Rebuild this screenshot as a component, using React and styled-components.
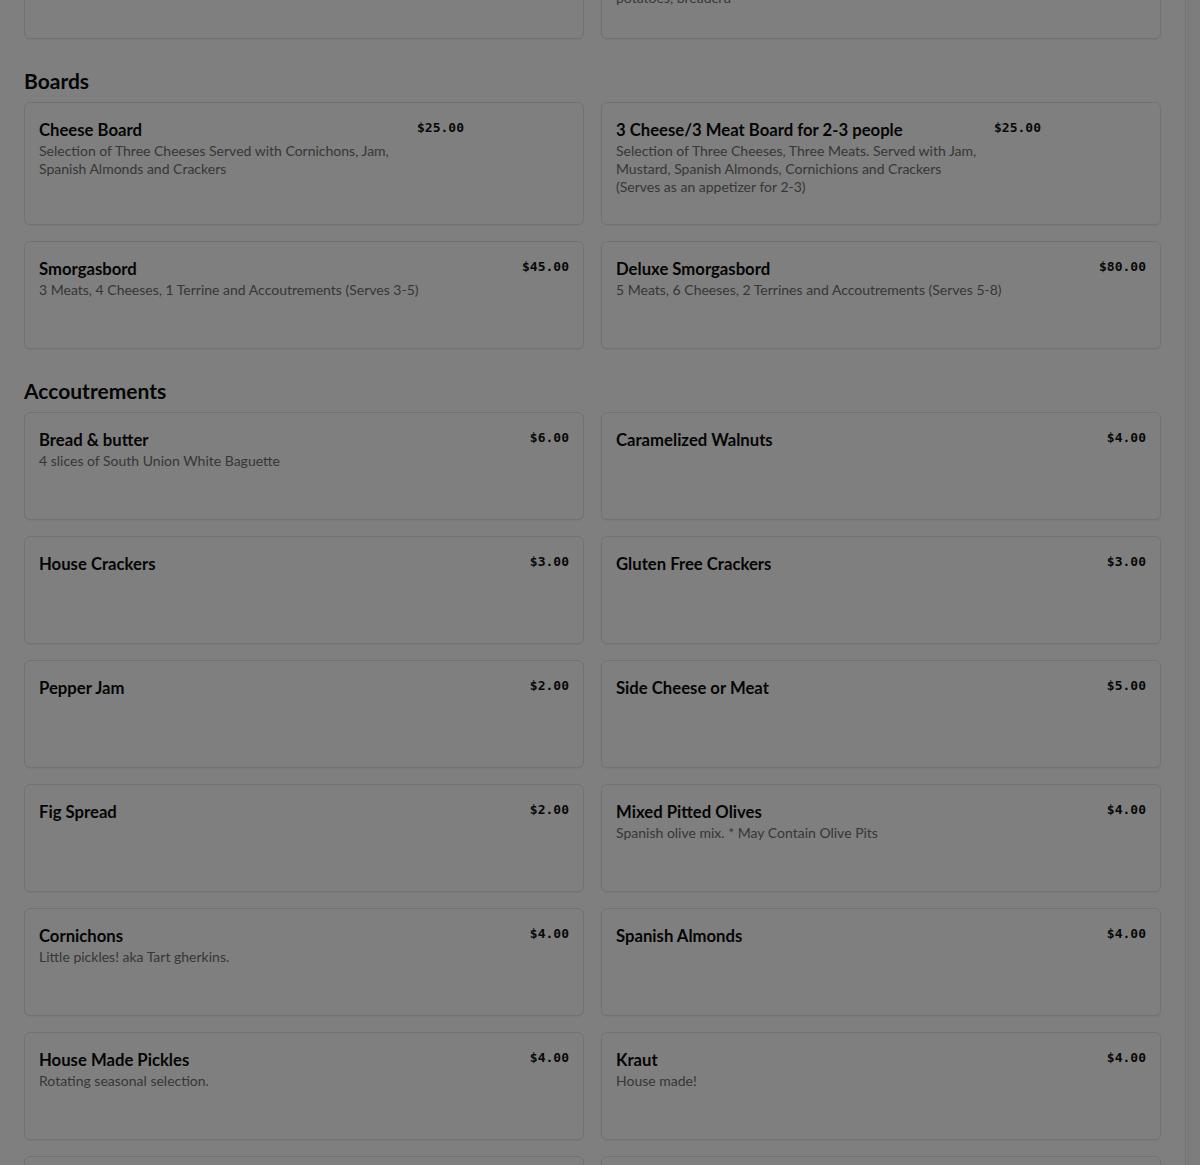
import React, { useLayoutEffect, useRef } from "react";
import styled, { createGlobalStyle } from "styled-components";

const GlobalStyle = createGlobalStyle`
  html, body { margin: 0; padding: 0; height: 100%; overflow: hidden; }
  body { font-family: Lato, "Noto Sans", sans-serif; background: #ffffff; color: #1a1a1a; }
  * { box-sizing: border-box; }
`;

const Page = styled.div`
  display: flex;
  height: 100vh;
  overflow: hidden;
  background: #ffffff;
`;

const Main = styled.main`
  position: relative;
  flex: 1;
  height: 100vh;
  overflow-y: auto;
  scrollbar-width: none;
  padding: 24px 24px 40px;
  &::-webkit-scrollbar { display: none; }
`;

const Gutter = styled.div`
  flex: 0 0 15px;
  background: linear-gradient(to right, #e6e6e6 0, #e6e6e6 1px, #fbfbfb 1px, #fbfbfb 3px, #ececec 3px, #ececec 4px, #fafafa 4px);
`;

const Overlay = styled.div`
  position: fixed;
  inset: 0;
  background: rgba(0, 0, 0, 0.5);
  z-index: 10;
`;

const Section = styled.section``;

const SectionTitle = styled.h2`
  margin: 28px 0 7px;
  font-family: Lato, "Noto Sans", sans-serif;
  font-size: 21px;
  line-height: 28px;
  font-weight: 700;
  color: #0a0a0a;
`;

const Grid = styled.div`
  display: grid;
  grid-template-columns: 1fr 1fr;
  gap: 16px 17px;
`;

const Card = styled.article`
  min-height: 108px;
  border: 1px solid #e4e4e4;
  border-radius: 6px;
  background: #ffffff;
  box-shadow: 0 1px 2px rgba(0, 0, 0, 0.06);
  padding: 14px 14px 28px;
`;

const Row = styled.div`
  display: flex;
  align-items: flex-start;
  gap: 16px;
`;

const Info = styled.div`
  flex: 1 1 auto;
  min-width: 0;
`;

const ItemName = styled.h3`
  margin: 0;
  padding-top: 1px;
  font-size: 16.7px;
  line-height: 24px;
  font-weight: 700;
  color: #0a0a0a;
`;

const ItemDesc = styled.p`
  margin: 0;
  font-size: 14px;
  line-height: 18px;
  font-weight: 400;
  color: #6e6e6e;
  white-space: pre-line;
`;

const Price = styled.span`
  flex: 0 0 auto;
  font-family: "DejaVu Sans Mono", "Liberation Mono", monospace;
  font-size: 13px;
  line-height: 22px;
  font-weight: 700;
  color: #0f0f0f;
`;

const ImageSlot = styled.div`
  flex: 0 0 89px;
  height: 1px;
`;

const sections = [
  {
    title: "Small Plates",
    items: [
      { name: "Charcuterie Plate", price: "$14.00", desc: "Chef's selection of cured meats." },
      {
        name: "Raclette",
        price: "$16.00",
        desc: "Melted raclette cheese served over roasted fingerling\npotatoes, breadcru",
      },
    ],
  },
  {
    title: "Boards",
    anchor: true,
    items: [
      {
        name: "Cheese Board",
        price: "$25.00",
        desc: "Selection of Three Cheeses Served with Cornichons, Jam, Spanish Almonds and Crackers",
        image: true,
      },
      {
        name: "3 Cheese/3 Meat Board for 2-3 people",
        price: "$25.00",
        desc: "Selection of Three Cheeses, Three Meats. Served with Jam, Mustard, Spanish Almonds, Cornichions and Crackers (Serves as an appetizer for 2-3)",
        image: true,
      },
      { name: "Smorgasbord", price: "$45.00", desc: "3 Meats, 4 Cheeses, 1 Terrine and Accoutrements (Serves 3-5)" },
      { name: "Deluxe Smorgasbord", price: "$80.00", desc: "5 Meats, 6 Cheeses, 2 Terrines and Accoutrements (Serves 5-8)" },
    ],
  },
  {
    title: "Accoutrements",
    items: [
      { name: "Bread & butter", price: "$6.00", desc: "4 slices of South Union White Baguette" },
      { name: "Caramelized Walnuts", price: "$4.00" },
      { name: "House Crackers", price: "$3.00" },
      { name: "Gluten Free Crackers", price: "$3.00" },
      { name: "Pepper Jam", price: "$2.00" },
      { name: "Side Cheese or Meat", price: "$5.00" },
      { name: "Fig Spread", price: "$2.00" },
      { name: "Mixed Pitted Olives", price: "$4.00", desc: "Spanish olive mix. * May Contain Olive Pits" },
      { name: "Cornichons", price: "$4.00", desc: "Little pickles! aka Tart gherkins." },
      { name: "Spanish Almonds", price: "$4.00" },
      { name: "House Made Pickles", price: "$4.00", desc: "Rotating seasonal selection." },
      { name: "Kraut", price: "$4.00", desc: "House made!" },
      { name: "Whole Grain Mustard", price: "$2.00" },
      { name: "Honey", price: "$2.00" },
      { name: "Dried Apricots", price: "$3.00" },
      { name: "Marcona Almonds", price: "$5.00" },
    ],
  },
];

function MenuCard({ item }) {
  return (
    <Card>
      <Row>
        <Info>
          <ItemName>{item.name}</ItemName>
          {item.desc && <ItemDesc>{item.desc}</ItemDesc>}
        </Info>
        <Price>{item.price}</Price>
        {item.image && <ImageSlot />}
      </Row>
    </Card>
  );
}

export default function App() {
  const mainRef = useRef(null);
  const anchorRef = useRef(null);

  useLayoutEffect(() => {
    if (mainRef.current && anchorRef.current) {
      mainRef.current.scrollTop = anchorRef.current.offsetTop - 67;
    }
  }, []);

  return (
    <>
      <GlobalStyle />
      <Page>
        <Main ref={mainRef}>
          {sections.map((s) => (
            <Section key={s.title}>
              <SectionTitle ref={s.anchor ? anchorRef : undefined}>{s.title}</SectionTitle>
              <Grid>
                {s.items.map((it) => (
                  <MenuCard key={it.name} item={it} />
                ))}
              </Grid>
            </Section>
          ))}
        </Main>
        <Gutter />
      </Page>
      <Overlay />
    </>
  );
}
